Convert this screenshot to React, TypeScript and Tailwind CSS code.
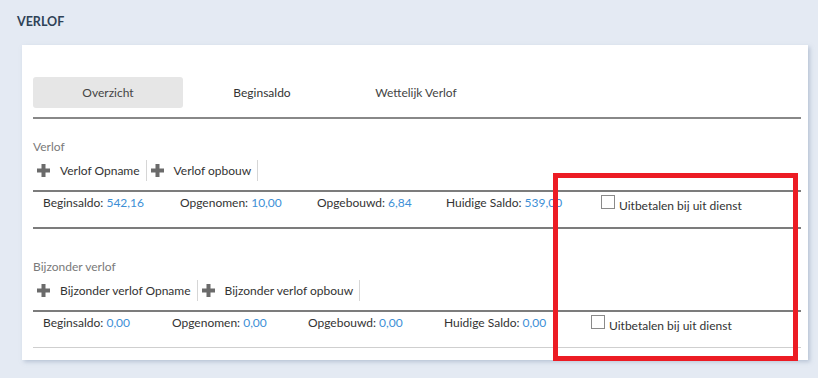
import React from "react";

const font = { fontFamily: "Lato, 'Open Sans', sans-serif" };

function Plus() {
  return (
    <svg width="13" height="13" viewBox="0 0 13 13" className="shrink-0">
      <rect x="4.5" y="0" width="4" height="13" fill="#6b6b6b" />
      <rect x="0" y="4.5" width="13" height="4" fill="#6b6b6b" />
    </svg>
  );
}

function ActionButton({ label }: { label: string }) {
  return (
    <div className="flex h-[21px] items-center border-r border-[#d6d6d6] pl-[4px] pr-[6px]">
      <Plus />
      <span className="ml-[10px] text-[12px] text-[#333]">{label}</span>
    </div>
  );
}

function Stat({ label, value, width }: { label: string; value: string; width: number }) {
  return (
    <div className="shrink-0 text-[12px] leading-[16px] text-[#333]" style={{ width }}>
      {label} <span className="text-[#3d8fd6]">{value}</span>
    </div>
  );
}

function Section({
  title,
  actions,
  stats,
  widths,
  topGap,
  bottomLine,
}: {
  title: string;
  actions: string[];
  stats: [string, string][];
  widths: number[];
  topGap: number;
  bottomLine: string;
}) {
  return (
    <div style={{ paddingTop: topGap }}>
      <div className="h-[16px] text-[12px] leading-[16px] text-[#7a7a7a]">{title}</div>
      <div className="mt-[5px] flex">
        {actions.map((a) => (
          <ActionButton key={a} label={a} />
        ))}
      </div>
      <div className="mt-[9px] border-t-2 border-[#7c7c7c]" />
      <div className="flex h-[35px] items-start pl-[10px] pt-[3px]">
        {stats.map(([l, v], i) => (
          <Stat key={l} label={l} value={v} width={widths[i]} />
        ))}
        <div className="flex items-start">
          <span className="mt-[0px] inline-block h-[14px] w-[14px] border border-[#8a8a8a] bg-white" />
          <span className="ml-[4px] mt-[3px] text-[12px] leading-[16px] text-[#333]">Uitbetalen bij uit dienst</span>
        </div>
      </div>
      <div className={bottomLine} />
    </div>
  );
}

export default function App() {
  return (
    <div className="relative h-[378px] w-[818px] overflow-hidden bg-[#e4eaf3]" style={font}>
      <h1 className="pl-[17px] pt-[13px] text-[12.5px] font-bold leading-[18px] text-[#2e4257]">VERLOF</h1>

      <div className="ml-[22px] mt-[14px] h-[315px] w-[786px] bg-white pl-[11px] pr-[7px] pt-[32px] shadow-[2px_2px_4px_rgba(150,165,190,0.55)]">
        <div className="flex gap-[4px]">
          <div className="flex h-[31px] w-[150px] items-center justify-center rounded-[3px] bg-[#e6e6e6] text-[12px] text-[#444]">
            Overzicht
          </div>
          <div className="flex h-[31px] w-[150px] items-center justify-center text-[12px] text-[#333]">
            Beginsaldo
          </div>
          <div className="flex h-[31px] w-[150px] items-center justify-center text-[12px] text-[#444]">
            Wettelijk Verlof
          </div>
        </div>
        <div className="mt-[9px] border-t-2 border-[#888]" />

        <Section
          title="Verlof"
          actions={["Verlof Opname", "Verlof opbouw"]}
          stats={[
            ["Beginsaldo:", "542,16"],
            ["Opgenomen:", "10,00"],
            ["Opgebouwd:", "6,84"],
            ["Huidige Saldo:", "539,00"],
          ]}
          widths={[137, 137, 129, 155]}
          topGap={20}
          bottomLine="border-t-2 border-[#7c7c7c]"
        />

        <Section
          title="Bijzonder verlof"
          actions={["Bijzonder verlof Opname", "Bijzonder verlof opbouw"]}
          stats={[
            ["Beginsaldo:", "0,00"],
            ["Opgenomen:", "0,00"],
            ["Opgebouwd:", "0,00"],
            ["Huidige Saldo:", "0,00"],
          ]}
          widths={[129, 136, 136, 147]}
          topGap={30}
          bottomLine="border-t border-[#cfcfcf]"
        />
      </div>

      <div className="absolute left-[553px] top-[173px] h-[188px] w-[245px] border-[5px] border-[#ec1c24]" />
    </div>
  );
}
